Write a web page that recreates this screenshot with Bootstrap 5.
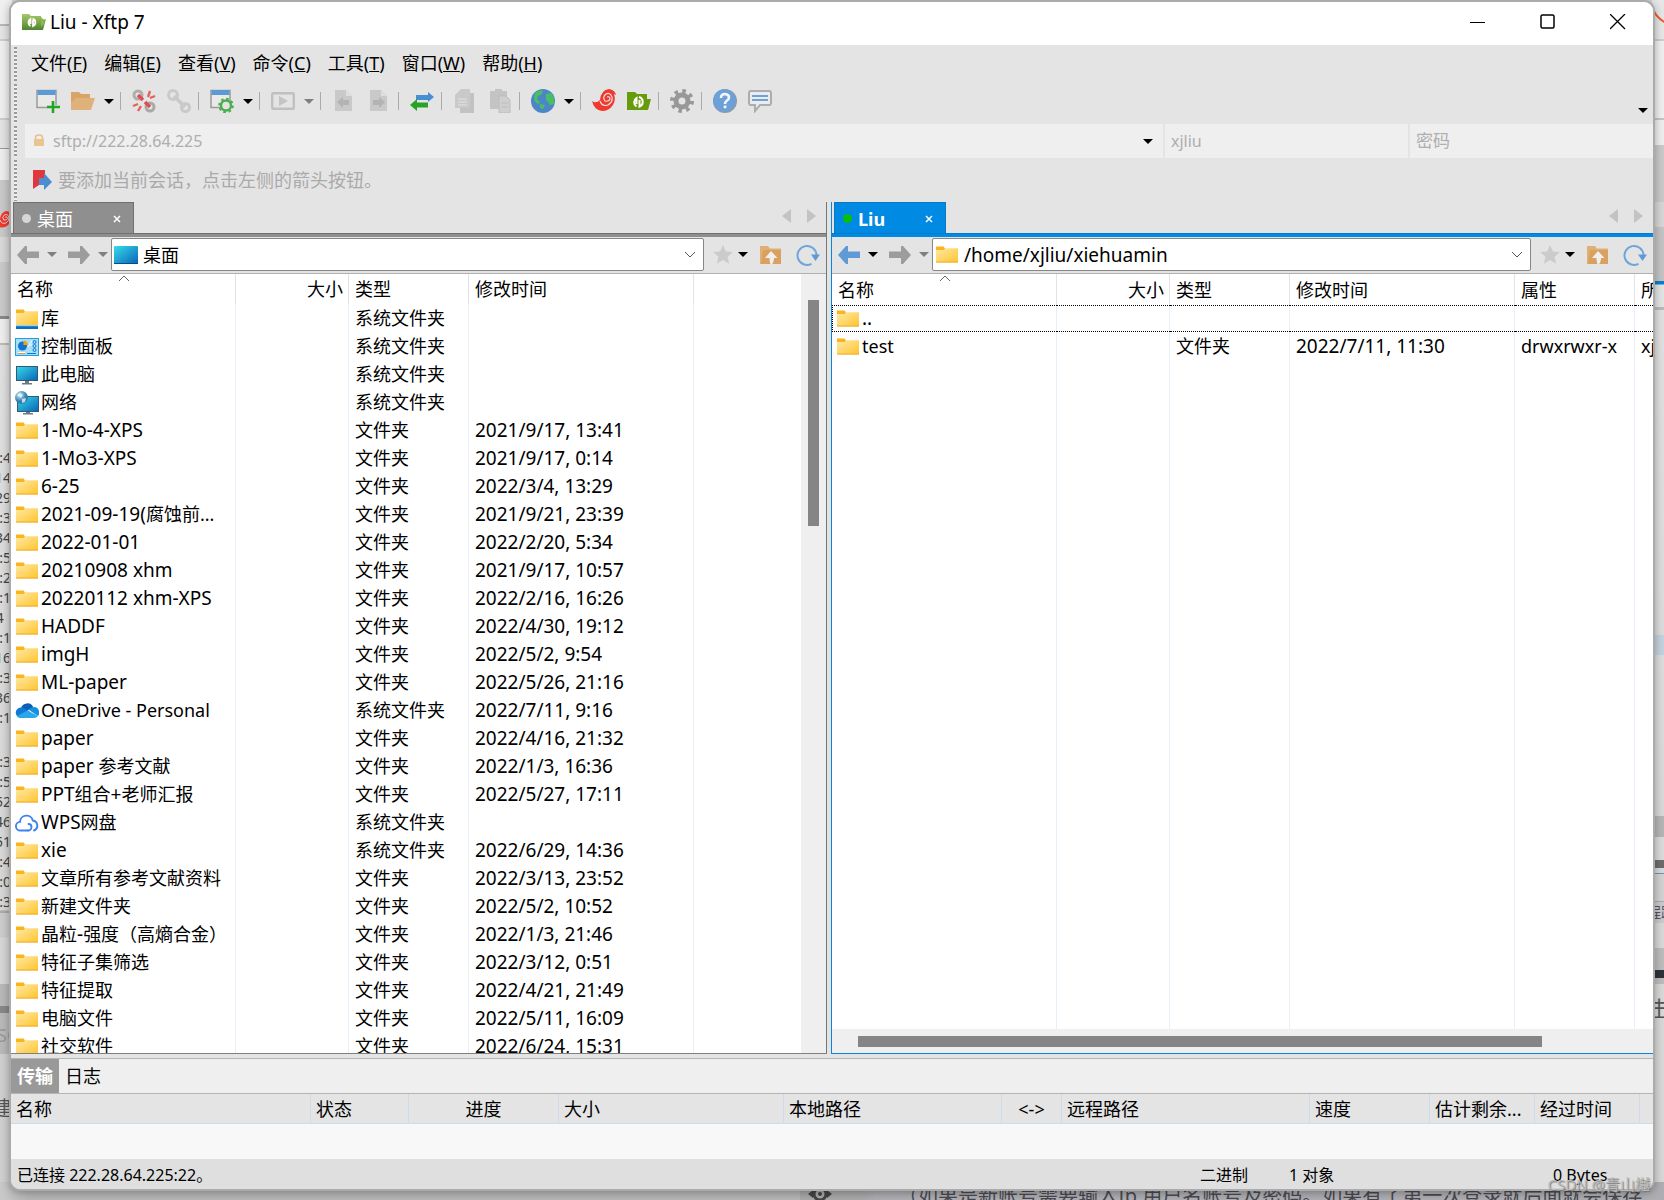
<!DOCTYPE html>
<html lang="zh-CN">
<head>
<meta charset="utf-8">
<meta name="viewport" content="width=device-width, initial-scale=1">
<title>Liu - Xftp 7</title>
<link href="https://cdn.jsdelivr.net/npm/bootstrap@5.3.0/dist/css/bootstrap.min.css" rel="stylesheet">
<style>
  body { font-family: "Noto Sans", "Noto Sans CJK SC", sans-serif; font-size: 18px; line-height: 28px; color: #000; background: #d2d2d2; }
  button, input { font-family: inherit; color: inherit; }
  .ico { width: 24px; height: 24px; flex: none; display: block; }
  .plain { border: 0; background: none; padding: 0; display: flex; align-items: center; justify-content: center; flex: none; }
  .en { font-size: 19px; }

  /* desktop behind the window */
  .desk { position: absolute; top: 0; bottom: 0; width: 12px; overflow: hidden; }
  .desk-l { left: 0; background: linear-gradient(#efefef 24px, #b8b8b8 24px 26px, #e4e4e4 26px 39px, #ccc 39px 41px, #efefef 41px 118px, #ccc 118px 120px, #e3e3e3 120px 148px, #999 148px 149px, #eee 149px 180px, #c9c9c9 180px 237px, #d8d8d8 237px 262px, #c9c9c9 262px 316px, #888 316px 319px, #eee 319px 343px, #bbb 343px 345px, #e0e0e0 345px, #d6d6d6 910px, #aaa 911px 913px, #ccc 913px 937px, #d6d6d6 938px 984px, #b8b8b8 984px 1006px, #888 1006px 1013px, #b9b9b9 1013px 1054px, #cfcfcf 1054px); }
  .desk-r { right: 0; background: linear-gradient(#e6e6e6 39px, #ccc 39px 41px, #efefef 41px 118px, #c4c4c4 118px 120px, #eee 120px 145px, #c9c9c9 145px 202px, #d6d6d6 202px 227px, #c4c4c4 227px 281px, #0a7fce 281px 284px, #e4e4e4 285px 307px, #bbb 307px 310px, #e0e0e0 310px, #dcdcdc 635px, #c3d2dd 635px 655px, #dcdcdc 655px, #d8d8d8 816px, #b5b5b5 816px 837px, #dadada 837px 860px, #6c6c6c 860px 868px, #d8d8d8 868px 873px, #5b9ac4 873px 874px, #d2d2d2 874px 901px, #aaa 901px 902px, #c9c9d2 902px 923px, #d8d8d8 923px 948px, #bcbcbc 948px 970px, #2d333b 970px 978px, #bcbcbc 978px 984px, #d8d8d8 984px); }
  .desk-b { position: absolute; left: 0; right: 0; bottom: 0; height: 18px; overflow: hidden; background: linear-gradient(90deg, #c9c9c9, #b6b6b6 30px 800px, #a9a9a9 800px 864px, #adadb2 875px); font-size: 20px; line-height: 28px; color: #48484f; white-space: nowrap; padding-left: 898px; }
  .desk-gear { position: absolute; left: 808px; bottom: 0; }
  .desk-times { position: absolute; top: 448px; left: 0; width: 11px; font-size: 14px; line-height: 20px; color: #444; }
  .desk-times div { display: flex; justify-content: flex-end; height: 20px; }
  .desk-times .gap-line { height: 24px; }
  .desk-swirl { position: absolute; left: -6px; top: 211px; }
  .desk-word { position: absolute; white-space: nowrap; color: #555; }
  .word-sc { left: -3px; top: 1021px; color: #999; }
  .word-jian { left: -8px; top: 1095px; font-size: 20px; }
  .word-lu { left: -5px; top: 898px; font-size: 14px; }
  .word-ji { left: -4px; top: 994px; font-size: 22px; }

  /* window */
  .app-shell { height: 100vh; padding: 0 9px 9px; position: relative; }
  .app-window { border: 2px solid #ababab; border-radius: 11px; overflow: hidden; background: #e4e4e4; box-shadow: 0 2px 8px rgba(0,0,0,.3); }
  .title-bar { height: 43px; background: #fff; font-size: 19px; padding: 0 0 3px 11px; }
  .win-btn { width: 70px; height: 40px; }

  .grip { width: 3px; margin: 2px 0 1px 3px; flex: none; background: repeating-linear-gradient(#9a9a9a 0 2px, #f0f0f0 2px 4px); }
  .menu-row { height: 37px; }
  .menu-list { column-gap: 1px; padding: 0 0 2px 6px; }
  .menu-row a { color: #000; text-decoration: none; padding: 0 8px; }
  .tool-row { height: 42px; }
  .tool-list { padding-left: 13px; }
  .tb { width: 35px; height: 38px; }
  .tb.leaf { color: #689b0b; }
  .tb-caret { width: 18px; height: 38px; }
  .tb-more { width: 20px; height: 12px; }
  .caret-mark { width: 0; height: 0; border: 5px solid transparent; border-top-color: #000; border-bottom: 0; flex: none; }
  .caret-mark.dim { border-top-color: #808080; }
  .tb-sep { width: 8px; height: 18px; flex: none; background: linear-gradient(#ababab, #ababab) 2px 0 / 1px 100% no-repeat; }
  .addr-row { height: 34px; color: #aeaeae; font-size: 16px; }
  .addr-set { column-gap: 2px; }
  .addr-box { background: #efefef; min-width: 0; }
  .addr-host { flex: 1138 1 0; }
  .addr-user, .addr-pass { flex: 243 1 0; }
  .addr-user input, .addr-pass input { margin-left: 6px; }
  .addr-lock { margin: 0 8px; }
  .addr-drop { width: 30px; height: 30px; }
  .addr-box input, .path-box input { border: 0; background: none; padding: 0; min-width: 0; outline: 0; }
  .addr-box input::placeholder { color: #aeaeae; opacity: 1; font-size: 17px; }
  .hint-row { height: 44px; color: #aaa; }
  .hint-text { padding-left: 13px; column-gap: 6px; }

  /* panes */
  .pane-set { min-height: 0; }
  .tab-strip { height: 31px; background: #e4e4e4; }
  .pane-tab { border: 1px solid #707070; border-bottom: 0; background: #8f8f8f; color: #fff; height: 32px; margin-left: 2px; padding: 0 12px 0 8px; column-gap: 6px; }
  .pane-tab.live { background: #018ae4; border-color: #0a78c2; font-weight: 700; }
  .tab-name { width: 70px; }
  .live .tab-name { width: 61px; }
  .tab-dot { width: 9px; height: 9px; border-radius: 50%; background: #d6d6d6; flex: none; }
  .tab-dot.on { background: #0abf0a; }
  .tab-step { width: 25px; height: 16px; }
  .tab-steps { padding: 0 2px 3px 0; }
  .tab-line { height: 4px; background: #8c8f8c; border-top: 1px solid #707070; }
  .live-pane .tab-line { background: #018ae4; border-top-color: #0a78c2; }
  .pane-l { flex: 816 1 0; min-width: 0; border-right: 1px solid #777; border-bottom: 1px solid #808080; }
  .live-pane { flex: 822 1 0; min-width: 0; border-left: 1px solid #0a84d8; border-bottom: 1px solid #0a84d8; }
  .split-v { width: 4px; flex: none; }
  .path-row { height: 37px; border-bottom: 1px solid #b0b0b0; padding-bottom: 1px; }
  .path-row .plain { height: 30px; }
  .nav-zone { width: 100px; flex: none; color: #9c9c9c; padding-left: 4px; }
  .nav-go { width: 26px; }
  .nav-go.ready { color: #5e9bd6; }
  .nav-drop { width: 21px; }
  .end-zone { width: 122px; flex: none; padding-left: 3px; }
  .fav-btn { width: 31px; }
  .fav-drop { width: 10px; }
  .up-btn { width: 45px; }
  .reload-btn { width: 29px; }
  .path-box { height: 33px; border: 1px solid #868686; border-radius: 2px; background: #fff; padding: 0 7px 0 2px; column-gap: 5px; }
  .file-zone { background: #fff; min-height: 0; overflow: hidden; }
  .col-lines { flex: 1 1 0; overflow: hidden; min-width: 0;
    background-image: linear-gradient(#e6effa, #e6effa), linear-gradient(#e6effa, #e6effa), linear-gradient(#e6effa, #e6effa), linear-gradient(#e6effa, #e6effa), linear-gradient(#e6effa, #e6effa);
    background-size: 1px 100%; background-repeat: no-repeat;
    background-position: 224px 0, 337px 0, 457px 0, 682px 0, 802px 0; }
  .pane-l .col-lines { background-position: 224px 0, 337px 0, 457px 0, 682px 0, 682px 0; }
  .files { table-layout: fixed; width: 100%; border-collapse: separate; border-spacing: 0; }
  .w-name, .w-time { width: 225px; }
  .w-size { width: 113px; }
  .w-kind { width: 120px; }
  .files th, .files td { height: 28px; padding: 0 0 0 6px; white-space: nowrap; overflow: hidden; font-weight: 400; line-height: 28px; }
  .files th { height: 30px; border-right: 1px solid #e3e3e3; position: relative; }
  .live-pane .files th { height: 31px; }
  .files th:last-child { border-right: 0; }
  .files td:first-child { padding-left: 4px; }
  .files .num { text-align: right; padding-right: 5px; }
  .files td .ico { display: inline-block; vertical-align: -6px; margin-right: 2px; }
  .files .when { font-size: 19px; }
  .files .picked td { border: 1px dotted #000; border-width: 1px 0; height: 26px; line-height: 24px; }
  .files .picked td:first-child { border-left-width: 1px; padding-left: 3px; }
  .sort-mark { position: absolute; left: 107px; top: 1px; width: 12px; height: 7px; }
  .v-scroll { width: 25px; background: #efefef; padding: 26px 7px 0; flex: none; }
  .v-thumb { width: 11px; height: 30%; background: #858585; }
  .h-scroll { height: 24px; background: #efefef; padding: 7px 0 0 26px; flex: none; }
  .h-thumb { height: 11px; width: 86%; background: #858585; }

  /* transfer area */
  .split-h { height: 5px; border-bottom: 1px solid #b4b4b4; flex: none; }
  .job-tabs { height: 35px; background: #efefef; border-bottom: 1px solid #b4b4b4; flex: none; }
  .job-tabs button { height: 34px; width: 48px; }
  .job-tabs .now { background: #999; color: #fff; font-weight: 700; }
  .jobs { table-layout: fixed; width: 100%; border-collapse: separate; border-spacing: 0; flex: none; }
  .jobs th { height: 30px; line-height: 28px; padding: 1px 0 0 5px; font-weight: 400; white-space: nowrap; border-right: 1px solid #cfdaea; border-bottom: 1px solid #cfdaea; overflow: hidden; }
  .jobs th.mid { text-align: center; padding: 1px 0 0; }
  .jobs th:last-child { border-right: 0; }
  .j-name { width: 300px; } .j-state { width: 98px; } .j-done { width: 150px; } .j-size { width: 225px; } .j-local { width: 218px; }
  .j-dir { width: 60px; } .j-remote { width: 248px; } .j-speed { width: 120px; } .j-left { width: 105px; }
  .job-blank { height: 35px; background: #f8f8f8; flex: none; }
  .state-bar { height: 30px; background: #dfdfdf; font-size: 16px; line-height: 28px; padding: 2px 6px 0; flex: none; }
  .s-mode { width: 89px; } .s-count { width: 264px; } .s-bytes { width: 94px; }
  .water { position: absolute; right: 14px; bottom: 4px; font-size: 15px; line-height: 24px; color: #b9b9b9; text-shadow: 1px 1px 1px #777; }
</style>
<script src="https://cdn.jsdelivr.net/npm/bootstrap@5.3.0/dist/js/bootstrap.bundle.min.js"></script>
</head>
<body class="overflow-hidden">

<svg width="0" height="0" class="position-absolute" aria-hidden="true">
  <defs>
    <linearGradient id="gFold" x1="0" y1="0" x2="1" y2="1"><stop offset="0" stop-color="#ffe9a6"/><stop offset="1" stop-color="#ffc42e"/></linearGradient>
    <linearGradient id="gScr" x1="0" y1="0" x2="1" y2="1"><stop offset="0" stop-color="#35dcea"/><stop offset="1" stop-color="#0b62b8"/></linearGradient>
    <linearGradient id="gGreen" x1="0" y1="0" x2="0" y2="1"><stop offset="0" stop-color="#a8c968"/><stop offset="1" stop-color="#4f8430"/></linearGradient>
    <radialGradient id="gGlobe" cx=".35" cy=".3"><stop offset="0" stop-color="#cfe9f5"/><stop offset="1" stop-color="#2f7fae"/></radialGradient>
  </defs>
  <symbol id="folder" viewBox="0 0 24 24"><path d="M1 3.500h7.500l1.500 2v3H1z" fill="#f9b51c"/><path d="M1 7h7.500l2-1.800H23V19.500H1z" fill="url(#gFold)"/><path d="M1 19h22" stroke="#f0ac2b"/></symbol>
  <symbol id="library" viewBox="0 0 24 24"><path d="M1 2.500h7.500l1.500 2v3H1z" fill="#f9b51c"/><path d="M1 6h7.500l2-1.800H23V18H1z" fill="url(#gFold)"/><path d="M1 19h22v3H1z" fill="#0f6cbd"/><path d="M1 19h22" stroke="#29a7ea"/></symbol>
  <symbol id="control" viewBox="0 0 24 24"><rect x=".5" y="3.500" width="23" height="17" fill="#a7def8" stroke="#1e9fe0"/><circle cx="7.500" cy="11" r="4.500" fill="#1273cf"/><path d="M8.500 10V5.500a4.500 4.500 0 0 1 4.500 4.500z" fill="#f59e17"/><path d="M13 12l3-5M16 6.500h2M15 10h2M3 17.500h7" stroke="#fff" fill="none"/><path d="M3 18.500h7" stroke="#e8932b"/><path d="M12 18.500h9" stroke="#1273cf"/><circle cx="19.500" cy="7" r="1.500" fill="none" stroke="#1273cf"/><circle cx="19.500" cy="11" r="1.500" fill="none" stroke="#1273cf"/><circle cx="19.500" cy="15" r="1.500" fill="none" stroke="#1273cf"/></symbol>
  <symbol id="pc" viewBox="0 0 24 24"><rect x="1.500" y="3.500" width="21" height="14" fill="url(#gScr)" stroke="#37596e"/><path d="M10 18h4v2h-4zM7 20h10v1.500H7z" fill="#6d7a84"/></symbol>
  <symbol id="netpc" viewBox="0 0 24 24"><rect x="2.500" y="5.500" width="21" height="15" fill="url(#gScr)" stroke="#37596e"/><path d="M11 21h4v1.500h-4zM8 22h10v1.500H8z" fill="#6d7a84"/><circle cx="6.500" cy="6.500" r="6.500" fill="url(#gGlobe)"/><path d="M2 4l3-2 3 2-2 3zM7 8l4-1-1 4-3 1z" fill="#e9f6fb" opacity=".8"/></symbol>
  <symbol id="desktop" viewBox="0 0 24 24"><rect y="3" width="24" height="18" rx="1" fill="url(#gScr)"/><path d="M0 20h24v.500q0 .500-.500.500H.500q-.500 0-.500-.500z" fill="#0a4d80"/></symbol>
  <symbol id="onedrive" viewBox="0 1 24 24"><path d="M6 10.500a6.500 6.500 0 0 1 12.300-1.300L12 13z" fill="#0a5fb8"/><path d="M5.500 20A5.200 5.200 0 0 1 6.500 9.500c2 .1 4 1.300 8.500 4.500L8 20z" fill="#1079d6"/><path d="M14 12c1.500-2 3-2.900 4.800-2.900A5.400 5.400 0 0 1 23 18z" fill="#1490df"/><path d="M2 18l10.500-5.500 10.500 5.500q-1.500 2-4 2H5.500q-2 0-3.500-2z" fill="#28a8ea"/></symbol>
  <symbol id="wps" viewBox="0 1 24 24"><g fill="none" stroke="#3f82ee" stroke-width="1.900" stroke-linecap="round"><path d="M13 20.500H5.500a4.300 4.300 0 0 1-.500-8.600 6.500 6.500 0 0 1 12.800-1.400A5.200 5.200 0 0 1 19 20.500"/><path d="M13 20.500a3.500 3.500 0 0 0 3.500-3.500q0-2.800-3-3"/></g></symbol>
  <symbol id="openup" viewBox="0 0 24 24"><path d="M1 3h8l2 2.500h11V21H1z" fill="#dfb076"/><path d="M4 7h18v14H2z" fill="#d9a05f"/><path d="M12 8l6.500 7H15q0 5-3 7-1.500-2-1.500-7H6z" fill="#eef0ee"/></symbol>
  <symbol id="refresh" viewBox="0 0 24 24"><path d="M15.500 20.800A9.500 9.500 0 1 1 20.500 12" fill="none" stroke="#6ea6dc" stroke-width="2"/><path d="M15 11.500h9L19.500 18z" fill="#5d9bd6"/></symbol>
  <symbol id="star" viewBox="0 0 24 24"><path d="M12 2l2.800 6.500 7 .6-5.300 4.700 1.700 7L12 17l-6.200 3.800 1.700-7L2.200 9.100l7-.6z" fill="#cbcbcb"/></symbol>
  <symbol id="arrow-l" viewBox="0 0 24 24"><path d="M1 12L9 3h2v5.500h12v6.500H11v6H9z" fill="currentColor"/></symbol>
  <symbol id="arrow-r" viewBox="0 0 24 24"><path d="M23 12L15 3h-2v5.500H1v6.500h12v6h2z" fill="currentColor"/></symbol>
  <symbol id="swirl" viewBox="0 0 24 24"><path d="M0 12q4 3 8-1Q9 1 17 0q6 1 7 6l-2-1q2 6-1 11-4 6-11 6Q2 21 0 12z" fill="#f03a2e"/><path d="M8 12q2 6 8 4 5-3 4-8-2-5-6-3-4 3-1 7 4 1 5-2 0-3-3-2" fill="none" stroke="#eee0e0" stroke-width="1.200"/></symbol>
  <symbol id="xftp" viewBox="0 0 24 24"><path d="M0 3h8l2 2h10v5h4l-3 11H0z" fill="currentColor"/><path d="M9.500 17.500a5 5 0 0 1 0-8.500v6M12 8a5 5 0 0 1 .500 9.500V11" fill="none" stroke="#fff" stroke-width="2"/></symbol>
  <symbol id="page" viewBox="0 0 24 24"><path d="M3 1h11l6 6v15H3z" fill="#c9c9c9"/><path d="M14 1v6h6z" fill="#dedede"/></symbol>
  <symbol id="chev" viewBox="0 0 12 8"><path d="M1 1l5 5 5-5" fill="none" stroke="#555"/></symbol>
  <symbol id="cross" viewBox="0 0 8 8"><path d="M1 1l6 6M7 1L1 7" stroke="#fff" stroke-width="1.500"/></symbol>
  <symbol id="tri-l" viewBox="0 0 9 14"><path d="M9 0v14L0 7z" fill="#c3c3c3"/></symbol>
  <symbol id="tri-r" viewBox="0 0 9 14"><path d="M0 0v14l9-7z" fill="#c3c3c3"/></symbol>
</svg>

<!-- desktop strips that show around the window -->
<div class="desk desk-l">
  <svg class="desk-swirl" width="18" height="18" aria-hidden="true"><use href="#swirl"/></svg>
  <div class="desk-times"><div>:4</div><div>14</div><div>29</div><div>:3</div><div>34</div><div>:5</div><div>:2</div><div>:1</div><div>4&nbsp;&nbsp;</div><div>:1</div><div>16</div><div>:3</div><div>36</div><div>:1</div><div class="gap-line"></div><div>:3</div><div>:5</div><div>52</div><div>46</div><div>51</div><div>:4</div><div>:0</div><div>:3</div></div>
  <span class="desk-word word-sc">SC</span>
  <span class="desk-word word-jian">建</span>
</div>
<div class="desk desk-r">
  <svg class="position-absolute top-0 end-0" width="12" height="24" aria-hidden="true"><path d="M-2 -2Q0 16 14 23" fill="none" stroke="#f0582f" stroke-width="2"/></svg>
  <span class="desk-word word-lu">程路</span>
  <span class="desk-word word-ji">击</span>
</div>
<div class="desk-b">（如果是新账号需要输入Ip 用户名账号及密码。如果有了第一次登录就后面就会保存
  <svg class="desk-gear" width="24" height="16" aria-hidden="true"><circle cx="12" cy="10" r="6" fill="none" stroke="#444" stroke-width="3"/><circle cx="12" cy="10" r="2" fill="#444"/><path d="M0 10l5-4v8zM24 10l-5-4v8z" fill="#444"/></svg>
</div>

<div class="app-shell d-flex flex-column">
<div class="app-window d-flex flex-column flex-grow-1 position-relative">

  <header class="title-bar d-flex align-items-center flex-shrink-0">
    <svg class="ico" viewBox="0 0 24 24" aria-hidden="true"><path d="M0 4h7l2 2h10v4l5-1-3 11H0z" fill="url(#gGreen)"/><path d="M19 7l3 3h-2l3 3-4 4z" fill="#8db84d"/><path d="M8.500 16a4 4 0 0 1 0-7v5M10.500 8.500a4 4 0 0 1 .500 7.500V10" fill="none" stroke="#fff" stroke-width="1.800"/></svg>
    <span class="flex-grow-1 ps-1">Liu - Xftp 7</span>
    <button class="plain win-btn" aria-label="最小化"><svg width="16" height="16"><path d="M0 8.500h15" stroke="#000"/></svg></button>
    <button class="plain win-btn" aria-label="最大化"><svg width="16" height="16"><rect x="1" y="1" width="13" height="13" rx="1.500" fill="none" stroke="#000" stroke-width="1.500"/></svg></button>
    <button class="plain win-btn" aria-label="关闭"><svg width="16" height="16"><path d="M0 0l15 15M15 0L0 15" stroke="#000" stroke-width="1.300"/></svg></button>
  </header>

  <nav class="menu-row d-flex flex-shrink-0" aria-label="菜单">
    <span class="grip"></span>
    <div class="menu-list d-flex align-items-center">
      <a href="#">文件(<u>F</u>)</a><a href="#">编辑(<u>E</u>)</a><a href="#">查看(<u>V</u>)</a><a href="#">命令(<u>C</u>)</a><a href="#">工具(<u>T</u>)</a><a href="#">窗口(<u>W</u>)</a><a href="#">帮助(<u>H</u>)</a>
    </div>
  </nav>

  <div class="tool-row d-flex flex-shrink-0" role="toolbar" aria-label="工具栏">
    <span class="grip"></span>
    <div class="tool-list d-flex align-items-center flex-grow-1 pb-1">
      <button class="plain tb" aria-label="新建"><svg class="ico" viewBox="0 0 24 24"><rect x="1" y="1.500" width="19" height="17" fill="#e9e9e9" stroke="#9b9b9b" stroke-width="1.500"/><path d="M1.500 1h18v5h-18z" fill="#5d9ad3"/><path d="M17 12v12M11 18h12" stroke="#e4e4e4" stroke-width="4"/><path d="M17 12v12M11 18h13" stroke="#22a722" stroke-width="2.600"/></svg></button>
      <button class="plain tb" aria-label="打开"><svg class="ico" viewBox="0 0 24 24"><path d="M0 3h8l2 2h9v5H5L0 20z" fill="#d8a467"/><path d="M5 9h19l-4 12H0V14z" fill="#deb27a"/></svg></button>
      <button class="plain tb-caret" aria-label="打开选项"><span class="caret-mark"></span></button>
      <span class="tb-sep"></span>
      <button class="plain tb" aria-label="断开"><svg class="ico" viewBox="0 0 24 24" fill="none"><circle cx="6" cy="6" r="4" stroke="#adadad" stroke-width="3"/><circle cx="18" cy="18" r="4" stroke="#a9a9a9" stroke-width="3"/><path d="M6 6l5 5M13 13l5 5" stroke="#e34d50" stroke-width="3.500"/><path d="M16 8l2-6M18 9l5-2M6 15l-5 2M9 17l-3 5" stroke="#e5605f" stroke-width="2.400"/></svg></button>
      <button class="plain tb" aria-label="重新连接"><svg class="ico" viewBox="0 0 24 24" fill="none" stroke="#c9c9c9"><circle cx="6" cy="6" r="4.500" stroke-width="3"/><circle cx="18.500" cy="18.500" r="4" stroke-width="3"/><path d="M7 7l11 11" stroke-width="3.500"/></svg></button>
      <span class="tb-sep"></span>
      <button class="plain tb" aria-label="属性"><svg class="ico" viewBox="0 0 24 24"><rect x="1" y="1.500" width="19" height="17" fill="#e9e9e9" stroke="#9b9b9b" stroke-width="1.500"/><path d="M1.500 1h18v5h-18z" fill="#5d9ad3"/><circle cx="16" cy="16.500" r="5" fill="#e4e4e4" stroke="#4cae4c" stroke-width="2.400"/><circle cx="16" cy="16.500" r="6.800" fill="none" stroke="#4cae4c" stroke-width="2" stroke-dasharray="2.600 2.740"/></svg></button>
      <button class="plain tb-caret" aria-label="属性选项"><span class="caret-mark"></span></button>
      <span class="tb-sep"></span>
      <button class="plain tb" aria-label="执行"><svg class="ico" viewBox="0 0 24 24"><rect x="1.200" y="4.200" width="21.600" height="15.600" rx="1" fill="none" stroke="#c0c0c0" stroke-width="2.400"/><path d="M8 7l9 5-9 5z" fill="#c4c4c4"/></svg></button>
      <button class="plain tb-caret" aria-label="执行选项"><span class="caret-mark dim"></span></button>
      <span class="tb-sep"></span>
      <button class="plain tb" aria-label="向左传输"><svg class="ico" viewBox="0 0 24 24"><use href="#page"/><path d="M5 13l6-5v3h6v5h-6v3z" fill="#b3b3b3"/></svg></button>
      <button class="plain tb" aria-label="向右传输"><svg class="ico" viewBox="0 0 24 24"><use href="#page"/><path d="M18 13l-6-5v3H6v5h6v3z" fill="#b3b3b3"/></svg></button>
      <span class="tb-sep"></span>
      <button class="plain tb" aria-label="同步"><svg class="ico" viewBox="0 0 24 24"><path d="M24 8l-6-5v3H6v5h12v2z" fill="#4a8ed2"/><path d="M0 16l7-6v3.500h11v5H7V22z" fill="#27a327"/></svg></button>
      <span class="tb-sep"></span>
      <button class="plain tb" aria-label="复制"><svg class="ico" viewBox="0 0 24 24"><path d="M7 4h14v20H7z" fill="#c2c2c2"/><path d="M2 6l6-6h9v19H2z" fill="#c9c9c9"/><path d="M5 10h9M5 13h9M5 16h9" stroke="#dadada" stroke-width="1.300"/></svg></button>
      <button class="plain tb" aria-label="粘贴"><svg class="ico" viewBox="0 0 24 24"><path d="M2 2h5V0h7v2h5v18H2z" fill="#c4c4c4"/><path d="M11 7h7l4 4v13H11z" fill="#cfcfcf" stroke="#bdbdbd"/><path d="M13 14h7M13 18h7" stroke="#bdbdbd"/></svg></button>
      <span class="tb-sep"></span>
      <button class="plain tb" aria-label="语言"><svg class="ico" viewBox="0 0 24 24"><circle cx="12" cy="12" r="12" fill="#4c86c9"/><path d="M4 4q5-4 8-2l-1 3-4 2-1 3 3 3-1 2Q3 14 3 8zM15 5l5-1q4 4 3 11l-4 1-2-3-2-2zM9 15l5 1-2 4-3-1z" fill="#48bf62"/></svg></button>
      <button class="plain tb-caret" aria-label="语言选项"><span class="caret-mark"></span></button>
      <span class="tb-sep"></span>
      <button class="plain tb" aria-label="Xshell"><svg class="ico"><use href="#swirl"/></svg></button>
      <button class="plain tb leaf" aria-label="Xftp"><svg class="ico"><use href="#xftp"/></svg></button>
      <span class="tb-sep"></span>
      <button class="plain tb" aria-label="选项"><svg class="ico" viewBox="0 0 24 24" fill="none" stroke="#989898"><circle cx="12" cy="12" r="6" stroke-width="5"/><circle cx="12" cy="12" r="10" stroke-width="4" stroke-dasharray="3.500 4.354"/></svg></button>
      <span class="tb-sep"></span>
      <button class="plain tb" aria-label="帮助"><svg class="ico" viewBox="0 0 24 24"><circle cx="12" cy="12" r="12" fill="#8d9aa8"/><circle cx="11.500" cy="11.500" r="11.300" fill="#6d9fd8"/><path d="M8 9q0-4 4-4 4 .300 4 3.500 0 2-2.500 3.500-1.500 1-1.500 3" fill="none" stroke="#f4f7fa" stroke-width="2.600"/><path d="M10.700 16.500h2.700v2.700h-2.700z" fill="#f4f7fa"/></svg></button>
      <button class="plain tb" aria-label="反馈"><svg class="ico" viewBox="0 0 24 24"><path d="M3 2h18q2 0 2 2v10q0 2-2 2H12l-5 6v-6H3q-2 0-2-2V4q0-2 2-2z" fill="#ececec" stroke="#adadad" stroke-width="2"/><path d="M4 7h16M4 11h16" stroke="#6da3da" stroke-width="2.200"/></svg></button>
    </div>
    <button class="plain tb-more align-self-end mb-2" aria-label="更多"><span class="caret-mark"></span></button>
  </div>

  <div class="addr-row d-flex flex-shrink-0">
    <span class="grip"></span>
    <div class="addr-set d-flex flex-grow-1 ms-2">
      <div class="addr-box addr-host d-flex align-items-center">
        <svg class="addr-lock flex-shrink-0" width="12" height="14" aria-hidden="true"><path d="M2.500 6V3.500Q2.500 1 6 1t3.500 2.500V6" fill="none" stroke="#e6c08a" stroke-width="1.600"/><rect x="1" y="5" width="10" height="7" rx="1" fill="#e9c48e"/></svg>
        <input class="flex-grow-1" aria-label="主机" value="sftp://222.28.64.225">
        <button class="plain addr-drop" aria-label="主机列表"><span class="caret-mark"></span></button>
      </div>
      <div class="addr-box addr-user d-flex align-items-center"><input class="w-100" aria-label="用户名" value="xjliu"></div>
      <div class="addr-box addr-pass d-flex align-items-center"><input class="w-100" type="password" aria-label="密码" placeholder="密码"></div>
    </div>
  </div>

  <div class="hint-row d-flex flex-shrink-0">
    <span class="grip"></span>
    <div class="hint-text d-flex align-items-center">
      <svg width="22" height="22" aria-hidden="true"><path d="M3 1h12v12l-6 3-6 4z" fill="#e0373f"/><path d="M9 9h5V4l8 9-8 8v-5H9z" fill="#4d8cd0"/></svg>
      <span>要添加当前会话，点击左侧的箭头按钮。</span>
    </div>
  </div>

  <main class="pane-set d-flex flex-grow-1">
    <section class="pane-l d-flex flex-column" aria-label="桌面">
      <div class="tab-strip d-flex flex-shrink-0">
        <div class="pane-tab d-flex align-items-center"><span class="tab-dot"></span><span class="tab-name">桌面</span><button class="plain" aria-label="关闭标签"><svg width="8" height="8"><use href="#cross"/></svg></button></div>
        <div class="tab-steps ms-auto d-flex align-items-center"><button class="plain tab-step" aria-label="上一个"><svg width="9" height="14"><use href="#tri-l"/></svg></button><button class="plain tab-step" aria-label="下一个"><svg width="9" height="14"><use href="#tri-r"/></svg></button></div>
      </div>
      <div class="tab-line flex-shrink-0"></div>
      <div class="path-row d-flex align-items-center flex-shrink-0">
        <div class="nav-zone d-flex align-items-center">
          <button class="plain nav-go" aria-label="后退"><svg class="ico"><use href="#arrow-l"/></svg></button><button class="plain nav-drop" aria-label="后退记录"><span class="caret-mark dim"></span></button><button class="plain nav-go ms-1" aria-label="前进"><svg class="ico"><use href="#arrow-r"/></svg></button><button class="plain nav-drop" aria-label="前进记录"><span class="caret-mark dim"></span></button>
        </div>
        <div class="path-box d-flex align-items-center flex-grow-1"><svg class="ico"><use href="#desktop"/></svg><input class="flex-grow-1" aria-label="本地路径" value="桌面"><button class="plain" aria-label="路径列表"><svg width="12" height="8"><use href="#chev"/></svg></button></div>
        <div class="end-zone d-flex align-items-center"><button class="plain fav-btn" aria-label="收藏"><svg class="ico"><use href="#star"/></svg></button><button class="plain fav-drop" aria-label="收藏列表"><span class="caret-mark"></span></button><button class="plain up-btn" aria-label="上一级"><svg class="ico"><use href="#openup"/></svg></button><button class="plain reload-btn" aria-label="刷新"><svg class="ico"><use href="#refresh"/></svg></button></div>
      </div>
      <div class="file-zone d-flex flex-grow-1">
        <div class="col-lines">
          <table class="files">
            <colgroup><col class="w-name"><col class="w-size"><col class="w-kind"><col class="w-time"><col></colgroup>
            <thead><tr><th>名称<svg class="sort-mark"><path d="M1 6l5-5 5 5" fill="none" stroke="#666"/></svg></th><th class="num">大小</th><th>类型</th><th>修改时间</th><th></th></tr></thead>
            <tbody>
              <tr><td><svg class="ico"><use href="#library"/></svg>库</td><td></td><td>系统文件夹</td><td></td><td></td></tr>
              <tr><td><svg class="ico"><use href="#control"/></svg>控制面板</td><td></td><td>系统文件夹</td><td></td><td></td></tr>
              <tr><td><svg class="ico"><use href="#pc"/></svg>此电脑</td><td></td><td>系统文件夹</td><td></td><td></td></tr>
              <tr><td><svg class="ico"><use href="#netpc"/></svg>网络</td><td></td><td>系统文件夹</td><td></td><td></td></tr>
              <tr><td><svg class="ico"><use href="#folder"/></svg><span class="en">1-Mo-4-XPS</span></td><td></td><td>文件夹</td><td class="when">2021/9/17, 13:41</td><td></td></tr>
              <tr><td><svg class="ico"><use href="#folder"/></svg><span class="en">1-Mo3-XPS</span></td><td></td><td>文件夹</td><td class="when">2021/9/17, 0:14</td><td></td></tr>
              <tr><td><svg class="ico"><use href="#folder"/></svg><span class="en">6-25</span></td><td></td><td>文件夹</td><td class="when">2022/3/4, 13:29</td><td></td></tr>
              <tr><td><svg class="ico"><use href="#folder"/></svg><span class="en">2021-09-19(</span>腐蚀前...</td><td></td><td>文件夹</td><td class="when">2021/9/21, 23:39</td><td></td></tr>
              <tr><td><svg class="ico"><use href="#folder"/></svg><span class="en">2022-01-01</span></td><td></td><td>文件夹</td><td class="when">2022/2/20, 5:34</td><td></td></tr>
              <tr><td><svg class="ico"><use href="#folder"/></svg><span class="en">20210908 xhm</span></td><td></td><td>文件夹</td><td class="when">2021/9/17, 10:57</td><td></td></tr>
              <tr><td><svg class="ico"><use href="#folder"/></svg><span class="en">20220112 xhm-XPS</span></td><td></td><td>文件夹</td><td class="when">2022/2/16, 16:26</td><td></td></tr>
              <tr><td><svg class="ico"><use href="#folder"/></svg><span class="en">HADDF</span></td><td></td><td>文件夹</td><td class="when">2022/4/30, 19:12</td><td></td></tr>
              <tr><td><svg class="ico"><use href="#folder"/></svg><span class="en">imgH</span></td><td></td><td>文件夹</td><td class="when">2022/5/2, 9:54</td><td></td></tr>
              <tr><td><svg class="ico"><use href="#folder"/></svg><span class="en">ML-paper</span></td><td></td><td>文件夹</td><td class="when">2022/5/26, 21:16</td><td></td></tr>
              <tr><td><svg class="ico"><use href="#onedrive"/></svg>OneDrive - Personal</td><td></td><td>系统文件夹</td><td class="when">2022/7/11, 9:16</td><td></td></tr>
              <tr><td><svg class="ico"><use href="#folder"/></svg><span class="en">paper</span></td><td></td><td>文件夹</td><td class="when">2022/4/16, 21:32</td><td></td></tr>
              <tr><td><svg class="ico"><use href="#folder"/></svg><span class="en">paper </span>参考文献</td><td></td><td>文件夹</td><td class="when">2022/1/3, 16:36</td><td></td></tr>
              <tr><td><svg class="ico"><use href="#folder"/></svg><span class="en">PPT</span>组合<span class="en">+</span>老师汇报</td><td></td><td>文件夹</td><td class="when">2022/5/27, 17:11</td><td></td></tr>
              <tr><td><svg class="ico"><use href="#wps"/></svg><span class="en">WPS</span>网盘</td><td></td><td>系统文件夹</td><td></td><td></td></tr>
              <tr><td><svg class="ico"><use href="#folder"/></svg><span class="en">xie</span></td><td></td><td>系统文件夹</td><td class="when">2022/6/29, 14:36</td><td></td></tr>
              <tr><td><svg class="ico"><use href="#folder"/></svg>文章所有参考文献资料</td><td></td><td>文件夹</td><td class="when">2022/3/13, 23:52</td><td></td></tr>
              <tr><td><svg class="ico"><use href="#folder"/></svg>新建文件夹</td><td></td><td>文件夹</td><td class="when">2022/5/2, 10:52</td><td></td></tr>
              <tr><td><svg class="ico"><use href="#folder"/></svg>晶粒<span class="en">-</span>强度（高熵合金）</td><td></td><td>文件夹</td><td class="when">2022/1/3, 21:46</td><td></td></tr>
              <tr><td><svg class="ico"><use href="#folder"/></svg>特征子集筛选</td><td></td><td>文件夹</td><td class="when">2022/3/12, 0:51</td><td></td></tr>
              <tr><td><svg class="ico"><use href="#folder"/></svg>特征提取</td><td></td><td>文件夹</td><td class="when">2022/4/21, 21:49</td><td></td></tr>
              <tr><td><svg class="ico"><use href="#folder"/></svg>电脑文件</td><td></td><td>文件夹</td><td class="when">2022/5/11, 16:09</td><td></td></tr>
              <tr><td><svg class="ico"><use href="#folder"/></svg>社交软件</td><td></td><td>文件夹</td><td class="when">2022/6/24, 15:31</td><td></td></tr>
            </tbody>
          </table>
        </div>
        <div class="v-scroll"><div class="v-thumb"></div></div>
      </div>
    </section>

    <div class="split-v"></div>

    <section class="live-pane d-flex flex-column" aria-label="Liu">
      <div class="tab-strip d-flex flex-shrink-0">
        <div class="pane-tab live d-flex align-items-center"><span class="tab-dot on"></span><span class="tab-name">Liu</span><button class="plain" aria-label="关闭标签"><svg width="8" height="8"><use href="#cross"/></svg></button></div>
        <div class="tab-steps ms-auto d-flex align-items-center"><button class="plain tab-step" aria-label="上一个"><svg width="9" height="14"><use href="#tri-l"/></svg></button><button class="plain tab-step" aria-label="下一个"><svg width="9" height="14"><use href="#tri-r"/></svg></button></div>
      </div>
      <div class="tab-line flex-shrink-0"></div>
      <div class="path-row d-flex align-items-center flex-shrink-0">
        <div class="nav-zone d-flex align-items-center">
          <button class="plain nav-go ready" aria-label="后退"><svg class="ico"><use href="#arrow-l"/></svg></button><button class="plain nav-drop" aria-label="后退记录"><span class="caret-mark"></span></button><button class="plain nav-go ms-1" aria-label="前进"><svg class="ico"><use href="#arrow-r"/></svg></button><button class="plain nav-drop" aria-label="前进记录"><span class="caret-mark dim"></span></button>
        </div>
        <div class="path-box d-flex align-items-center flex-grow-1"><svg class="ico"><use href="#folder"/></svg><input class="flex-grow-1 en" aria-label="远程路径" value="/home/xjliu/xiehuamin"><button class="plain" aria-label="路径列表"><svg width="12" height="8"><use href="#chev"/></svg></button></div>
        <div class="end-zone d-flex align-items-center"><button class="plain fav-btn" aria-label="收藏"><svg class="ico"><use href="#star"/></svg></button><button class="plain fav-drop" aria-label="收藏列表"><span class="caret-mark"></span></button><button class="plain up-btn" aria-label="上一级"><svg class="ico"><use href="#openup"/></svg></button><button class="plain reload-btn" aria-label="刷新"><svg class="ico"><use href="#refresh"/></svg></button></div>
      </div>
      <div class="file-zone d-flex flex-column flex-grow-1">
        <div class="col-lines">
          <table class="files">
            <colgroup><col class="w-name"><col class="w-size"><col class="w-kind"><col class="w-time"><col class="w-kind"><col></colgroup>
            <thead><tr><th>名称<svg class="sort-mark"><path d="M1 6l5-5 5 5" fill="none" stroke="#666"/></svg></th><th class="num">大小</th><th>类型</th><th>修改时间</th><th>属性</th><th>所有者</th></tr></thead>
            <tbody>
              <tr class="picked"><td><svg class="ico"><use href="#folder"/></svg><span class="en">..</span></td><td></td><td></td><td></td><td></td><td></td></tr>
              <tr><td><svg class="ico"><use href="#folder"/></svg>test</td><td></td><td>文件夹</td><td class="when">2022/7/11, 11:30</td><td>drwxrwxr-x</td><td>xjliu</td></tr>
            </tbody>
          </table>
        </div>
        <div class="h-scroll"><div class="h-thumb"></div></div>
      </div>
    </section>
  </main>

  <div class="split-h"></div>
  <div class="job-tabs d-flex" role="tablist">
    <button class="plain now" role="tab" aria-selected="true">传输</button>
    <button class="plain" role="tab" aria-selected="false">日志</button>
  </div>
  <table class="jobs">
    <colgroup><col class="j-name"><col class="j-state"><col class="j-done"><col class="j-size"><col class="j-local"><col class="j-dir"><col class="j-remote"><col class="j-speed"><col class="j-left"><col class="j-left"><col></colgroup>
    <thead><tr><th>名称</th><th>状态</th><th class="mid">进度</th><th>大小</th><th>本地路径</th><th class="mid">&lt;-&gt;</th><th>远程路径</th><th>速度</th><th>估计剩余...</th><th>经过时间</th><th></th></tr></thead>
  </table>
  <div class="job-blank"></div>
  <footer class="state-bar d-flex">
    <span class="flex-grow-1">已连接 222.28.64.225:22。</span>
    <span class="s-mode">二进制</span>
    <span class="s-count">1 对象</span>
    <span class="s-bytes">0 Bytes</span>
  </footer>
</div>
<div class="water">CSDN @青山樾</div>
</div>
</body>
</html>
